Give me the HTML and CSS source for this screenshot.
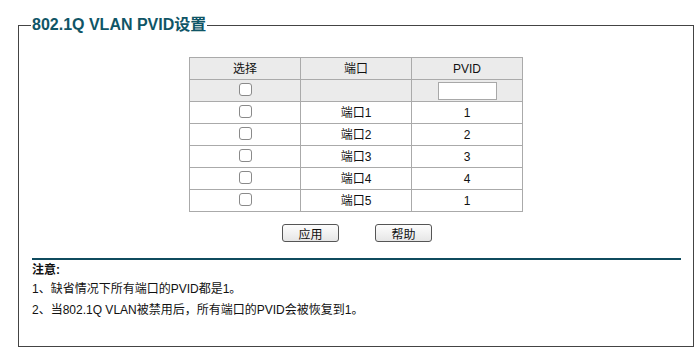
FILE: index.html
```html
<!DOCTYPE html>
<html lang="zh">
<head>
<meta charset="utf-8">
<link rel="stylesheet" href="styles.css">
</head>
<body>
<fieldset class="panel">
  <legend class="panel-title">802.1Q VLAN PVID设置</legend>
  <table class="grid">
    <tr class="head"><th>选择</th><th>端口</th><th>PVID</th></tr>
    <tr class="all"><td><span class="chk"></span></td><td></td><td><span class="txt"></span></td></tr>
    <tr><td><span class="chk"></span></td><td>端口1</td><td>1</td></tr>
    <tr><td><span class="chk"></span></td><td>端口2</td><td>2</td></tr>
    <tr><td><span class="chk"></span></td><td>端口3</td><td>3</td></tr>
    <tr><td><span class="chk"></span></td><td>端口4</td><td>4</td></tr>
    <tr><td><span class="chk"></span></td><td>端口5</td><td>1</td></tr>
  </table>
  <div class="actions">
    <button class="btn">应用</button>
    <button class="btn">帮助</button>
  </div>
  <div class="rule"></div>
  <div class="notes">
    <div class="note-title">注意:</div>
    <div class="note">1、缺省情况下所有端口的PVID都是1。</div>
    <div class="note">2、当802.1Q VLAN被禁用后，所有端口的PVID会被恢复到1。</div>
  </div>
</fieldset>
</body>
</html>
```
FILE: styles.css
```css
html, body { margin: 0; padding: 0; background: #fff; }
body {
  padding: 15px 0 0 18px;
  font-family: "Liberation Sans", "Noto Sans CJK SC", sans-serif;
  font-size: 12px;
  color: #111;
}
.panel {
  box-sizing: border-box;
  width: 676px;
  height: 332px;
  margin: 0;
  padding: 0 12px;
  border: 1px solid #444;
}
.panel-title {
  font-size: 16px;
  font-weight: bold;
  color: #0f5566;
  padding: 0 1px;
  margin-left: 0;
  line-height: 20px;
}
.grid {
  border-collapse: collapse;
  margin: 22px auto 0;
  width: 334px;
  table-layout: fixed;
}
.grid th, .grid td {
  border: 1px solid #aaa;
  height: 21px;
  padding: 0;
  text-align: center;
  vertical-align: middle;
  font-weight: normal;
  line-height: 14px;
}
.grid tr.head th, .grid tr.all td { background: #ebebeb; }
.chk {
  display: block;
  width: 11px;
  height: 11px;
  margin: -3px auto 0;
  border: 1px solid #8a8a8a;
  border-radius: 3px;
  background: #fff;
}
.txt {
  display: block;
  width: 57px;
  height: 16px;
  margin: 0 auto 0 26px;
  border: 1px solid #a8a8a8;
  background: #fff;
}
.actions {
  display: flex;
  justify-content: center;
  gap: 36px;
  margin-top: 12px;
  padding-left: 2px;
}
.btn {
  box-sizing: border-box;
  width: 57px;
  height: 18px;
  padding: 0;
  font: 12px "Liberation Sans", "Noto Sans CJK SC", sans-serif;
  color: #111;
  background: linear-gradient(#fdfdfd, #e6e6e6);
  border: 1px solid #555;
  border-radius: 3px;
}
.rule {
  height: 2px;
  background: #0f4b5e;
  margin: 16px 0 0 1px;
}
.notes { padding-left: 1px; }
.note-title { font-weight: bold; margin-top: 2px; line-height: 16px; }
.note { line-height: 21px; margin-top: 1px; }
.note + .note { margin-top: 0; }
```
